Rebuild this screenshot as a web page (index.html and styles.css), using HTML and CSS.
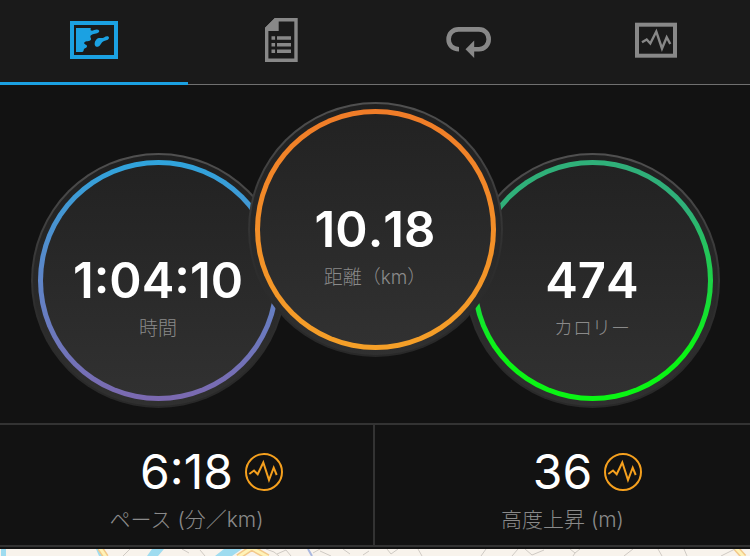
FILE: index.html
```html
<!DOCTYPE html>
<html lang="ja">
<head>
    <meta charset="UTF-8">
    <meta name="viewport" content="width=device-width, initial-scale=1.0">
    <title>アクティビティ</title>
    <link rel="stylesheet" href="styles.css">
</head>
<body>

    <!-- TABS -->
    <nav class="tabs">
        <a class="tab active" href="#map" aria-label="マップ">
            <svg class="tab-icon" viewBox="0 0 48 44">
                <rect x="2" y="5" width="44" height="34" fill="none" stroke="currentColor" stroke-width="4"/>
                <path fill="currentColor" d="M6 10H20.7C21 11 20 12.300 21.300 12.600C23 13 24.500 11.500 26.700 11.500C29 11.500 30 13 28.800 14.200C27 16 23 15.500 21 17.300C19.300 19 21.500 20 21 21.500C20 24 15.500 22.500 14.300 24.600C13.500 26.600 17 26.500 17 28.200C17 30 14.500 29.800 13.800 31.500C13.500 33 13.500 34 12 34H6Z"/>
                <path fill="currentColor" d="M25 27.500C24 25 25.500 21.500 28 20.300C30 19.400 32 20.600 34 19.400C36 18 38.500 17.800 39 19.500C39.200 21.500 37 22.200 34.800 22.800C32 23.600 31.500 25.200 30.200 27C29 29.200 25.800 29.500 25 27.500Z"/>
            </svg>
        </a>
        <a class="tab" href="#details" aria-label="詳細">
            <svg class="tab-icon" viewBox="0 0 48 44">
                <path fill="none" stroke="currentColor" stroke-width="3.400" d="M18.500 1.700H39V42.300H9.700V10.500Z"/>
                <path fill="currentColor" d="M8 10L18 0H21.700V13H8Z"/>
                <path fill="currentColor" d="M14.500 18.300h3.600v3.400h-3.600zM20 18.300h14v3.400H20zM14.500 25h3.600v3.400h-3.600zM20 25h14v3.400H20zM14.500 31.500h3.600v3.400h-3.600zM20 31.500h14v3.400H20z"/>
            </svg>
        </a>
        <a class="tab" href="#laps" aria-label="ラップ">
            <svg class="tab-icon" viewBox="0 0 48 44">
                <path fill="none" stroke="currentColor" stroke-width="4.600" d="M14 31.200C7.500 31.200 3.600 27 3.600 21.300C3.600 15.500 8 11.400 13.500 11.400H34C39.500 11.400 43.700 15.500 43.700 21.300C43.700 27 39.500 31.200 34 31.200H27"/>
                <path fill="currentColor" d="M20.500 31.300L29.200 22.500V40Z"/>
            </svg>
        </a>
        <a class="tab" href="#charts" aria-label="グラフ">
            <svg class="tab-icon" viewBox="0 0 48 44">
                <rect x="5" y="6.700" width="38" height="31" fill="none" stroke="currentColor" stroke-width="4"/>
                <polyline fill="none" stroke="currentColor" stroke-width="2.400" points="10,24.300 14.700,21.500 18.300,25.500 24.300,13.500 30,30.500 34.700,19.300 38.300,26"/>
            </svg>
        </a>
    </nav>

    <!-- DIALS -->
    <main class="dials">
        <section class="dial">
            <div class="ring ring-time">
                <p class="dial-value">1:04:10</p>
                <p class="dial-label">時間</p>
            </div>
        </section>
        <section class="dial dial-main">
            <div class="ring ring-distance">
                <p class="dial-value">10.18</p>
                <p class="dial-label">距離（km）</p>
            </div>
        </section>
        <section class="dial">
            <div class="ring ring-calories">
                <p class="dial-value">474</p>
                <p class="dial-label">カロリー</p>
            </div>
        </section>
    </main>

    <!-- STATS -->
    <div class="stats">
        <section class="stat">
            <div class="stat-row">
                <p class="stat-value">6:18</p>
                <svg class="stat-icon" viewBox="0 0 38 38">
                    <circle cx="19" cy="19" r="18"/>
                    <polyline points="4.300,21 9,17.500 12.700,21.300 18.300,9.500 24,27 28.700,14.700 31.700,22"/>
                </svg>
            </div>
            <p class="stat-label">ペース (分／km)</p>
        </section>
        <section class="stat">
            <div class="stat-row">
                <p class="stat-value">36</p>
                <svg class="stat-icon" viewBox="0 0 38 38">
                    <circle cx="19" cy="19" r="18"/>
                    <polyline points="4.300,21 9,17.500 12.700,21.300 18.300,9.500 24,27 28.700,14.700 31.700,22"/>
                </svg>
            </div>
            <p class="stat-label">高度上昇 (m)</p>
        </section>
    </div>

    <!-- MAP -->
    <div class="map" id="map">
        <svg class="map-tiles" viewBox="0 0 750 7" preserveAspectRatio="xMidYMin slice">
            <path fill="#9fdcf0" d="M1 0H6V7H1ZM96 0H101L104 7H99ZM152 0H164L158 7H147ZM224 0H242L232 7H215Z"/>
            <g fill="none" stroke="#f3c98b" stroke-width="6">
                <path d="M100 -1L106 8M253 -2L238 8M250 -2L268 8"/>
                <path d="M735 -2L744 8"/>
            </g>
            <g fill="none" stroke="#fff3b8" stroke-width="3">
                <path d="M100 -1L106 8M253 -2L238 8M250 -2L268 8"/>
                <path d="M735 -2L744 8"/>
            </g>
            <path fill="none" stroke="#a9b8e0" stroke-width="2" d="M308 0L312 7"/>
            <path fill="none" stroke="#cfcac4" d="M130 0L123 7M182 0L189 4M200 1L205 7M266 0L274 3L279 7M277 5L286 1L291 7M313 4L320 0M320 2L331 7M343 0L350 5M363 6L369 2M387 0L391 5L398 0M418 0L422 7M486 0L481 7M518 0L512 7M525 0L532 6L544 1M570 0L575 4L580 0M575 4L573 7M633 0L624 7M658 0L662 7M684 0L687 7M735 0L721 7"/>
        </svg>
    </div>

</body>
</html>
```
FILE: styles.css
```css
* { margin: 0; padding: 0; box-sizing: border-box; }

body {
    min-height: 100vh; display: flex; flex-direction: column;
    background: #121212; color: #fff;
    font-family: Inter, "Noto Sans CJK JP", sans-serif;
}

/* TABS */
.tabs {
    display: grid; grid-template-columns: repeat(4, 1fr);
    height: 85px; background: #1a1a1a;
    box-shadow: inset 0 -1px #707070;
}

.tab {
    display: flex; justify-content: center; align-items: flex-start;
    padding-top: 18px; color: #888; text-decoration: none;
    border-bottom: 3px solid transparent;
}

.tab.active { color: #1ba1e2; border-bottom-color: #1ba1e2; }

.tab-icon { width: 48px; height: 44px; }

/* DIALS */
.dials {
    display: flex; justify-content: center; align-items: flex-end;
    padding: 17px 0 15px;
}

.dial {
    flex: none; width: 255px; height: 255px; padding: 5px;
    border: 2px solid transparent; border-radius: 50%;
    background: linear-gradient(#202020, #303030) padding-box,
                linear-gradient(#505050, #2e2e2e 60%, #282828) border-box;
}

.dial-main {
    position: relative; z-index: 1;
    margin: 0 -38px 51px;
}

.ring {
    height: 100%; padding-top: 88px; text-align: center;
    border: 5px solid transparent; border-radius: 50%;
}

.ring-time {
    background: linear-gradient(#222, #313131) padding-box,
                linear-gradient(#2fa4dc, #5f85c8 50%, #7c69b0) border-box;
}

.ring-distance {
    background: linear-gradient(#222, #313131) padding-box,
                linear-gradient(#f07c28, #f5a028) border-box;
}

.ring-calories {
    background: linear-gradient(#222, #313131) padding-box,
                linear-gradient(#2fb079 20%, #0af514 80%) border-box;
}

.dial-value {
    font-size: 49px; line-height: 56px; font-weight: 600;
    font-kerning: none;
}

.dial-label {
    margin-top: 7px; color: #8a8a8a;
    font-size: 19px; line-height: 26px; font-weight: 300;
}

/* STATS */
.stats {
    display: grid; grid-template-columns: 1fr 1fr;
    border-top: 2px solid #333; border-bottom: 2px solid #333;
}

.stat { height: 120px; padding-top: 18px; text-align: center; }

.stat:first-child { border-right: 2px solid #333; }

.stat-row {
    display: grid; grid-template-columns: 1fr auto 1fr;
    align-items: center; gap: 12px;
}

.stat-value { grid-column: 2; font-size: 48px; line-height: 58px; }

.stat-icon {
    width: 38px; height: 38px;
    fill: none; stroke: #f5a01e; stroke-width: 2;
}

.stat-label {
    margin-top: 4px; color: #8a8a8a;
    font-size: 21px; line-height: 30px; font-weight: 300;
}

/* MAP */
.map {
    flex: 1; min-height: 7px; margin-top: 2px;
    position: relative; overflow: hidden; background: #f8f3ec;
}

.map-tiles { position: absolute; inset: 0; width: 100%; height: 100%; }
```
